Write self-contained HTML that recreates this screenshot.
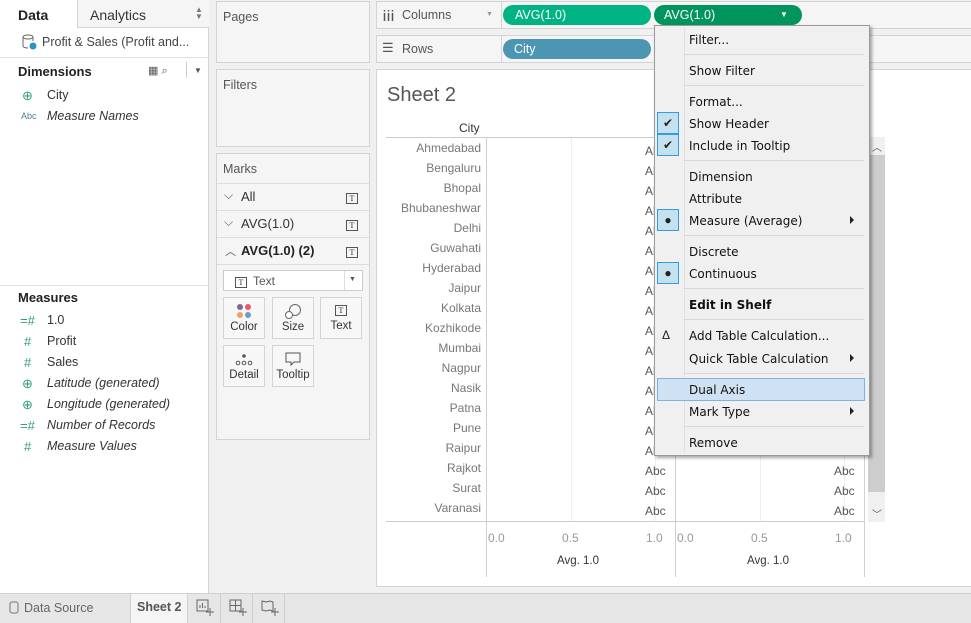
<!DOCTYPE html>
<html><head><meta charset="utf-8"><style>
*{box-sizing:border-box;margin:0;padding:0}
body{width:971px;height:623px;overflow:hidden;position:relative;background:#f0f0f0;font-family:"Liberation Sans",sans-serif;font-size:12px;color:#333}
.a{position:absolute;white-space:nowrap}
.box{position:absolute;background:#f5f5f5;border:1px solid #d4d4d4}
.g{color:#2e9e7f}
.it{font-style:italic}
.tic{display:inline-block;width:12px;height:11px;border:1px solid #555;font-size:8px;line-height:9px;text-align:center;font-family:"Liberation Serif",serif}
.mb{position:absolute;width:42px;height:42px;border:1px solid #d4d4d4;background:#f7f7f7;text-align:center;font-size:11.5px}
.cn{position:absolute;left:386px;width:95px;text-align:right;color:#777;font-size:12px}
.ab{position:absolute;color:#555;font-size:12px}
.mi{position:absolute;left:689px;font-family:"DejaVu Sans",sans-serif;font-size:12px;color:#111}
.sep{position:absolute;left:684px;width:180px;height:1px;background:#d8d8d8}
.chk{position:absolute;left:657px;width:22px;height:22px;background:#c5e0ef;border:1px solid #2f9fe0;text-align:center;line-height:20px;font-size:12px;color:#222}
.arr{position:absolute;left:850px;width:0;height:0;border-left:4px solid #222;border-top:4px solid transparent;border-bottom:4px solid transparent}
</style></head><body>
<div class="a" style="left:0;top:0;width:209px;height:593px;background:#fff;border-right:1px solid #d4d4d4"></div>
<div class="a" style="left:77px;top:0;width:132px;height:28px;background:#f5f5f5;border-left:1px solid #d4d4d4;border-bottom:1px solid #d4d4d4"></div>
<div class="a" style="left:18px;top:7px;font-size:14px;font-weight:bold;color:#222">Data</div>
<div class="a" style="left:90px;top:7px;font-size:14px;color:#333">Analytics</div>
<div class="a" style="left:195px;top:6px;font-size:8px;color:#777;line-height:7px">▲<br>▼</div>
<svg class="a" style="left:22px;top:34px" width="16" height="16"><ellipse cx="6" cy="3" rx="5" ry="2" fill="none" stroke="#666"/><path d="M1 3v9c0 1 2 2 5 2M11 3v4" fill="none" stroke="#666"/><circle cx="11" cy="12" r="3.5" fill="#2f8fc8"/></svg>
<div class="a" style="left:42px;top:35px;font-size:12.5px;color:#444">Profit &amp; Sales (Profit and...</div>
<div class="a" style="left:0;top:57px;width:209px;height:1px;background:#e0e0e0"></div>
<div class="a" style="left:18px;top:64px;font-size:13px;font-weight:bold;color:#222">Dimensions</div>
<div class="a" style="left:148px;top:64px;font-size:11px;color:#555">▦ ⌕</div>
<div class="a" style="left:186px;top:62px;width:1px;height:16px;background:#ccc"></div>
<div class="a" style="left:194px;top:66px;font-size:8px;color:#555">▼</div>
<div class="a g" style="left:22px;top:88px;font-size:13px">⊕</div>
<div class="a" style="left:47px;top:88px;font-size:12.5px">City</div>
<div class="a" style="left:21px;top:111px;font-size:9px;color:#4a7f9c">Abc</div>
<div class="a it" style="left:47px;top:109px;font-size:12.5px">Measure Names</div>
<div class="a" style="left:0;top:285px;width:209px;height:1px;background:#e0e0e0"></div>
<div class="a" style="left:18px;top:290px;font-size:13px;font-weight:bold;color:#222">Measures</div>
<div class="a g" style="left:20px;top:313px;font-size:13px">=#</div><div class="a" style="left:47px;top:313px;font-size:12.5px">1.0</div>
<div class="a g" style="left:24px;top:334px;font-size:13px">#</div><div class="a" style="left:47px;top:334px;font-size:12.5px">Profit</div>
<div class="a g" style="left:24px;top:355px;font-size:13px">#</div><div class="a" style="left:47px;top:355px;font-size:12.5px">Sales</div>
<div class="a g" style="left:22px;top:376px;font-size:13px">⊕</div><div class="a it" style="left:47px;top:376px;font-size:12.5px">Latitude (generated)</div>
<div class="a g" style="left:22px;top:397px;font-size:13px">⊕</div><div class="a it" style="left:47px;top:397px;font-size:12.5px">Longitude (generated)</div>
<div class="a g" style="left:20px;top:418px;font-size:13px">=#</div><div class="a it" style="left:47px;top:418px;font-size:12.5px">Number of Records</div>
<div class="a g" style="left:24px;top:439px;font-size:13px">#</div><div class="a it" style="left:47px;top:439px;font-size:12.5px">Measure Values</div>

<div class="box" style="left:216px;top:1px;width:154px;height:62px"></div>
<div class="a" style="left:223px;top:10px;color:#555;font-size:12.5px">Pages</div>
<div class="box" style="left:216px;top:69px;width:154px;height:78px"></div>
<div class="a" style="left:223px;top:78px;color:#555;font-size:12.5px">Filters</div>
<div class="box" style="left:216px;top:153px;width:154px;height:287px"></div>
<div class="a" style="left:223px;top:162px;color:#555;font-size:12.5px">Marks</div>
<div class="a" style="left:217px;top:183px;width:152px;height:1px;background:#ddd"></div>
<div class="a" style="left:217px;top:210px;width:152px;height:1px;background:#ddd"></div>
<div class="a" style="left:217px;top:237px;width:152px;height:1px;background:#ddd"></div>
<div class="a" style="left:217px;top:264px;width:152px;height:1px;background:#ddd"></div>
<div class="a" style="left:224px;top:188px;font-size:12px;color:#555">⌵</div><div class="a" style="left:241px;top:189px;font-size:13px">All</div><div class="a" style="left:346px;top:190px"><span class="tic">T</span></div>
<div class="a" style="left:224px;top:215px;font-size:12px;color:#555">⌵</div><div class="a" style="left:241px;top:216px;font-size:13px">AVG(1.0)</div><div class="a" style="left:346px;top:217px"><span class="tic">T</span></div>
<div class="a" style="left:225px;top:243px;font-size:11px;color:#555">︿</div><div class="a" style="left:241px;top:243px;font-size:13px;font-weight:bold;color:#222">AVG(1.0) (2)</div><div class="a" style="left:346px;top:244px"><span class="tic">T</span></div>
<div class="a" style="left:223px;top:270px;width:140px;height:21px;background:#fff;border:1px solid #ccc"></div>
<div class="a" style="left:235px;top:274px"><span class="tic">T</span></div><div class="a" style="left:253px;top:274px;color:#555;font-size:12px">Text</div>
<div class="a" style="left:344px;top:271px;width:1px;height:19px;background:#ddd"></div><div class="a" style="left:349px;top:276px;font-size:7px;color:#555">▼</div>
<div class="mb" style="left:223px;top:297px"><svg style="margin-top:5px" width="18" height="16"><circle cx="5" cy="4" r="3" fill="#7b6a91"/><circle cx="13" cy="4" r="3" fill="#e8586a"/><circle cx="5" cy="12" r="3" fill="#eda06a"/><circle cx="13" cy="12" r="3" fill="#6f9ac9"/></svg><div style="margin-top:-1px">Color</div></div>
<div class="mb" style="left:272px;top:297px"><svg style="margin-top:5px" width="18" height="16"><circle cx="11" cy="7" r="5.5" fill="none" stroke="#666"/><circle cx="5" cy="12" r="3.5" fill="#fff" stroke="#666"/></svg><div style="margin-top:-1px">Size</div></div>
<div class="mb" style="left:320px;top:297px"><div style="margin-top:6px"><span class="tic">T</span></div><div style="margin-top:4px">Text</div></div>
<div class="mb" style="left:223px;top:345px"><svg style="margin-top:5px" width="18" height="16"><circle cx="9" cy="5" r="1.8" fill="#555"/><circle cx="3" cy="12" r="1.8" fill="none" stroke="#555"/><circle cx="9" cy="12" r="1.8" fill="none" stroke="#555"/><circle cx="15" cy="12" r="1.8" fill="none" stroke="#555"/></svg><div style="margin-top:-1px">Detail</div></div>
<div class="mb" style="left:272px;top:345px"><svg style="margin-top:5px" width="18" height="16"><path d="M2 2h14v9h-6l-3 3v-3H2z" fill="none" stroke="#555"/></svg><div style="margin-top:-1px">Tooltip</div></div>

<div class="a" style="left:376px;top:1px;width:595px;height:28px;background:#f5f5f5;border:1px solid #d4d4d4;border-right:none"></div>
<div class="a" style="left:501px;top:1px;width:1px;height:28px;background:#d4d4d4"></div>
<svg class="a" style="left:383px;top:9px" width="12" height="12"><path d="M1.5 4v8M5.5 4v8M9.5 4v8" stroke="#555" stroke-width="1.5"/><path d="M1.5 1v1.5M5.5 1v1.5M9.5 1v1.5" stroke="#555" stroke-width="1.5"/></svg>
<div class="a" style="left:402px;top:8px;font-size:12.5px;color:#555">Columns</div>
<div class="a" style="left:486px;top:11px;font-size:7px;color:#999">▼</div>
<div class="a" style="left:503px;top:5px;width:148px;height:20px;border-radius:10px;background:#00b383;color:#fff;padding:3px 0 0 12px;font-size:12.5px">AVG(1.0)</div>
<div class="a" style="left:654px;top:5px;width:148px;height:20px;border-radius:10px;background:#00955f;color:#fff;padding:3px 0 0 10px;font-size:12.5px">AVG(1.0)<span style="position:absolute;left:126px;top:5px;font-size:8px">▼</span></div>
<div class="a" style="left:376px;top:35px;width:595px;height:28px;background:#f5f5f5;border:1px solid #d4d4d4;border-right:none"></div>
<div class="a" style="left:501px;top:35px;width:1px;height:28px;background:#d4d4d4"></div>
<div class="a" style="left:382px;top:40px;font-size:13px;color:#555">☰</div>
<div class="a" style="left:402px;top:42px;font-size:12.5px;color:#555">Rows</div>
<div class="a" style="left:503px;top:39px;width:148px;height:20px;border-radius:10px;background:#4c96b4;color:#fff;padding:3px 0 0 11px;font-size:12.5px">City</div>

<div class="a" style="left:376px;top:69px;width:595px;height:518px;background:#fff;border:1px solid #d4d4d4;border-right:none"></div>
<div class="a" style="left:387px;top:84px;font-size:20px;color:#555">Sheet 2</div>
<div class="a" style="left:459px;top:121px;font-size:12px;color:#333">City</div>
<div class="a" style="left:386px;top:137px;width:478px;height:1px;background:#ccc"></div>
<div class="a" style="left:386px;top:521px;width:478px;height:1px;background:#ccc"></div>
<div class="a" style="left:486px;top:138px;width:1px;height:439px;background:#d0d0d0"></div>
<div class="a" style="left:675px;top:138px;width:1px;height:439px;background:#d0d0d0"></div>
<div class="a" style="left:864px;top:138px;width:1px;height:439px;background:#d0d0d0"></div>
<div class="a" style="left:571px;top:138px;width:1px;height:383px;background:#eee"></div>
<div class="a" style="left:655px;top:138px;width:1px;height:383px;background:#eee"></div>
<div class="a" style="left:760px;top:138px;width:1px;height:383px;background:#eee"></div>
<div class="a" style="left:844px;top:138px;width:1px;height:383px;background:#eee"></div>
<div class="cn" style="top:141px">Ahmedabad</div><div class="cn" style="top:161px">Bengaluru</div><div class="cn" style="top:181px">Bhopal</div><div class="cn" style="top:201px">Bhubaneshwar</div><div class="cn" style="top:221px">Delhi</div><div class="cn" style="top:241px">Guwahati</div><div class="cn" style="top:261px">Hyderabad</div><div class="cn" style="top:281px">Jaipur</div><div class="cn" style="top:301px">Kolkata</div><div class="cn" style="top:321px">Kozhikode</div><div class="cn" style="top:341px">Mumbai</div><div class="cn" style="top:361px">Nagpur</div><div class="cn" style="top:381px">Nasik</div><div class="cn" style="top:401px">Patna</div><div class="cn" style="top:421px">Pune</div><div class="cn" style="top:441px">Raipur</div><div class="cn" style="top:461px">Rajkot</div><div class="cn" style="top:481px">Surat</div><div class="cn" style="top:501px">Varanasi</div>
<div class="ab" style="left:645px;top:141px;line-height:20px">Abc<br>Abc<br>Abc<br>Abc<br>Abc<br>Abc<br>Abc<br>Abc<br>Abc<br>Abc<br>Abc<br>Abc<br>Abc<br>Abc<br>Abc<br>Abc<br>Abc<br>Abc<br>Abc</div>
<div class="ab" style="left:834px;top:141px;line-height:20px">Abc<br>Abc<br>Abc<br>Abc<br>Abc<br>Abc<br>Abc<br>Abc<br>Abc<br>Abc<br>Abc<br>Abc<br>Abc<br>Abc<br>Abc<br>Abc<br>Abc<br>Abc<br>Abc</div>
<div class="a" style="left:868px;top:137px;width:17px;height:385px;background:#f0f0f0"></div>
<div class="a" style="left:868px;top:155px;width:17px;height:337px;background:#cdcdcd"></div>
<div class="a" style="left:872px;top:139px;font-size:10px;color:#555">︿</div>
<div class="a" style="left:872px;top:506px;font-size:10px;color:#555">﹀</div>
<div class="a" style="left:488px;top:531px;color:#999;font-size:12px">0.0</div><div class="a" style="left:562px;top:531px;color:#999;font-size:12px">0.5</div><div class="a" style="left:646px;top:531px;color:#999;font-size:12px">1.0</div>
<div class="a" style="left:677px;top:531px;color:#999;font-size:12px">0.0</div><div class="a" style="left:751px;top:531px;color:#999;font-size:12px">0.5</div><div class="a" style="left:835px;top:531px;color:#999;font-size:12px">1.0</div>
<div class="a" style="left:557px;top:555px;color:#333;font-size:11.5px">Avg. 1.0</div><div class="a" style="left:747px;top:555px;color:#333;font-size:11.5px">Avg. 1.0</div>

<div class="a" style="left:654px;top:25px;width:216px;height:431px;background:#f0f0f0;border:1px solid #9a9a9a;box-shadow:2px 2px 3px rgba(0,0,0,.35)"></div>
<div class="a" style="left:684px;top:28px;width:1px;height:425px;background:#e0e0e0"></div>
<div class="mi" style="top:33px">Filter...</div><div class="sep" style="top:54px"></div>
<div class="mi" style="top:64px">Show Filter</div><div class="sep" style="top:85px"></div>
<div class="mi" style="top:95px">Format...</div>
<div class="chk" style="top:112px">✔</div><div class="mi" style="top:117px">Show Header</div>
<div class="chk" style="top:134px">✔</div><div class="mi" style="top:139px">Include in Tooltip</div><div class="sep" style="top:160px"></div>
<div class="mi" style="top:170px">Dimension</div>
<div class="mi" style="top:192px">Attribute</div>
<div class="chk" style="top:209px">●</div><div class="mi" style="top:214px">Measure (Average)</div><div class="arr" style="top:216px"></div><div class="sep" style="top:235px"></div>
<div class="mi" style="top:245px">Discrete</div>
<div class="chk" style="top:262px">●</div><div class="mi" style="top:267px">Continuous</div><div class="sep" style="top:288px"></div>
<div class="mi" style="top:298px;font-weight:bold">Edit in Shelf</div><div class="sep" style="top:319px"></div>
<div class="a" style="left:662px;top:328px;font-size:12px;color:#222">Δ</div><div class="mi" style="top:329px">Add Table Calculation...</div>
<div class="mi" style="top:352px">Quick Table Calculation</div><div class="arr" style="top:354px"></div><div class="sep" style="top:373px"></div>
<div class="a" style="left:657px;top:378px;width:208px;height:23px;background:#cfe2f3;border:1px solid #7fb2e0"></div>
<div class="mi" style="top:383px">Dual Axis</div>
<div class="mi" style="top:405px">Mark Type</div><div class="arr" style="top:407px"></div><div class="sep" style="top:426px"></div>
<div class="mi" style="top:436px">Remove</div>

<div class="a" style="left:0;top:593px;width:971px;height:30px;background:#e6e6e6;border-top:1px solid #d0d0d0"></div>
<svg class="a" style="left:9px;top:601px" width="10" height="13"><rect x="1" y="1" width="8" height="11" rx="2" fill="none" stroke="#777"/></svg>
<div class="a" style="left:24px;top:601px;font-size:12.5px;color:#666">Data Source</div>
<div class="a" style="left:130px;top:594px;width:58px;height:29px;background:#f5f5f5;border-left:1px solid #d0d0d0;border-right:1px solid #d0d0d0"></div>
<div class="a" style="left:137px;top:600px;font-size:12.5px;font-weight:bold;color:#555">Sheet 2</div>
<div class="a" style="left:220px;top:594px;width:1px;height:29px;background:#d0d0d0"></div>
<div class="a" style="left:252px;top:594px;width:1px;height:29px;background:#d0d0d0"></div>
<div class="a" style="left:284px;top:594px;width:1px;height:29px;background:#d0d0d0"></div>
<svg class="a" style="left:196px;top:599px" width="18" height="18"><rect x="1" y="1" width="11" height="11" fill="none" stroke="#666"/><path d="M4 9V6M6.5 9V4M9 9V7M14 9v8M10 13h8" stroke="#666" fill="none"/></svg>
<svg class="a" style="left:229px;top:599px" width="18" height="18"><rect x="1" y="1" width="11" height="11" fill="none" stroke="#666"/><path d="M1 6.5h11M6.5 1v11M14 9v8M10 13h8" stroke="#666" fill="none"/></svg>
<svg class="a" style="left:261px;top:599px" width="18" height="18"><path d="M1 2l4 1 4-1 3 1v9l-3-1-4 1-4-1z" fill="none" stroke="#666"/><path d="M14 9v8M10 13h8" stroke="#666"/></svg>
</body></html>
